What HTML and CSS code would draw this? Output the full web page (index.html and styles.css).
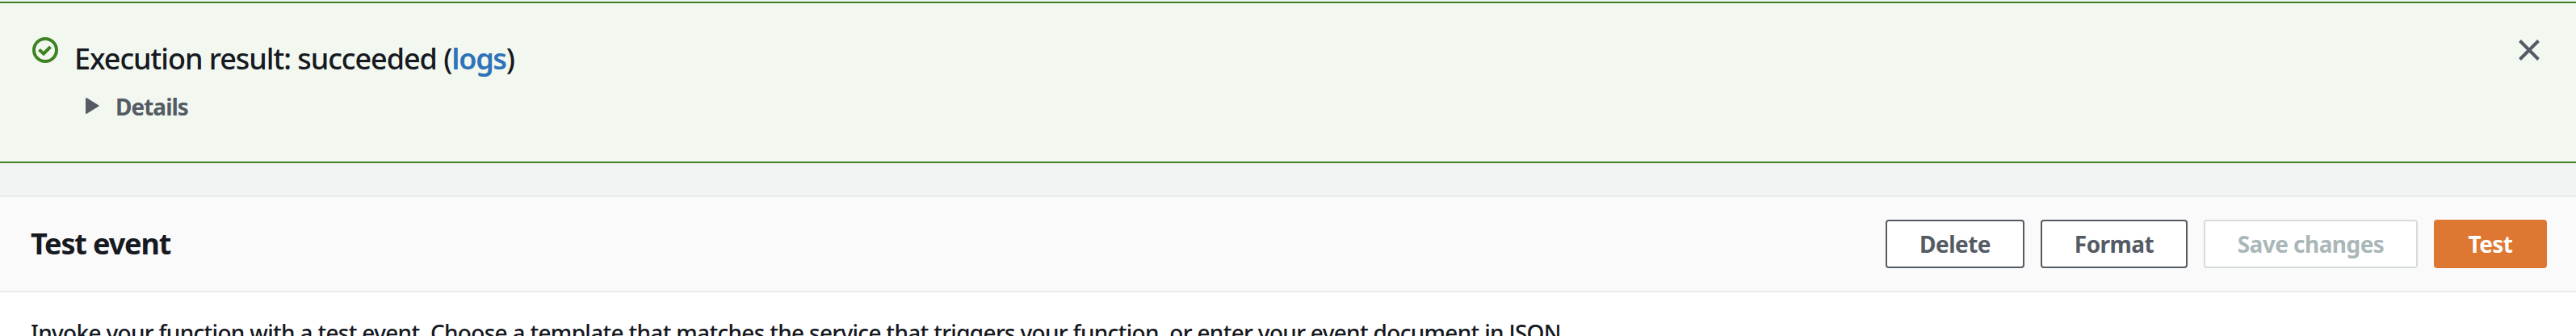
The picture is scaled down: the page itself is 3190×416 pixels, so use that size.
FILE: index.html
```html
<!DOCTYPE html>
<html lang="en">
<head>
<meta charset="utf-8">
<title>Test event</title>
<link rel="stylesheet" href="styles.css">
</head>
<body>
<section class="flash">
  <svg class="status" viewBox="0 0 32 32"><circle cx="16" cy="16" r="14"/><path d="M8.500 15.500l5.500 5 8.500-8.500"/></svg>
  <div class="message">
    <div class="result"><span>Execution result: succeeded (<a class="link">logs</a>)</span></div>
    <div class="details"><svg class="caret" viewBox="0 0 18 20"><path d="M2 1v18L16.500 10z"/></svg><span class="details-label">Details</span></div>
  </div>
  <svg class="close" viewBox="0 0 26 26"><path d="M1.500 1.500l23 23M24.500 1.500l-23 23"/></svg>
</section>
<section class="panel">
  <header class="head">
    <h2 class="title">Test event</h2>
    <div class="actions">
      <button class="btn delete"><span>Delete</span></button>
      <button class="btn format"><span>Format</span></button>
      <button class="btn save" disabled><span>Save changes</span></button>
      <button class="btn primary"><span>Test</span></button>
    </div>
  </header>
  <p class="intro">Invoke your function with a test event. Choose a template that matches the service that triggers your function, or enter your event document in JSON.</p>
</section>
</body>
</html>
```
FILE: styles.css
```css
* { box-sizing: border-box; }
body {
  margin: 0;
  padding-top: 2px;
  height: 416px;
  overflow: hidden;
  background: #f2f3f3;
  color: #16191f;
  font-family: "Noto Sans", sans-serif;
}
.flash {
  display: flex;
  align-items: flex-start;
  height: 200px;
  padding: 0 45px 0 40px;
  border-top: 2px solid #3f8223;
  border-bottom: 2px solid #3f8223;
  background: #f2f8f0;
}
.status { width: 32px; height: 32px; margin-top: 42px; fill: none; stroke: #3f8223; stroke-width: 4; }
.message { flex: 1; padding: 44px 0 0 20px; white-space: nowrap; }
.result { font-size: 36px; line-height: 50px; font-weight: 500; letter-spacing: -1.05px; }
.link { color: #2e73b8; font-weight: 600; letter-spacing: -1.3px; }
.details { display: flex; align-items: center; height: 40px; margin-top: 14px; padding-left: 13px; color: #545b64; }
.caret { width: 18px; height: 20px; margin: 0 20px 2px 0; fill: #545b64; stroke: #545b64; stroke-width: 2; stroke-linejoin: round; }
.details-label { font-size: 28px; line-height: 40px; font-weight: 700; letter-spacing: -1px; }
.close { width: 26px; height: 26px; margin-top: 45px; fill: none; stroke: #545b64; stroke-width: 4; }
.panel { margin-top: 40px; height: 174px; overflow: hidden; border-top: 2px solid #eaeded; background: #fff; }
.head {
  display: flex;
  align-items: center;
  justify-content: space-between;
  height: 118px;
  padding: 0 36px 0 38px;
  border-bottom: 2px solid #eaeded;
  background: #fafafa;
}
.title { margin: 0; font-size: 36px; line-height: 44px; font-weight: 700; letter-spacing: -1.15px; }
.actions { display: flex; gap: 20px; }
.btn {
  display: flex;
  align-items: center;
  justify-content: center;
  height: 60px;
  padding: 0;
  border: 2px solid #545b64;
  border-radius: 4px;
  background: #fff;
  color: #545b64;
  font: 700 28px/40px "Noto Sans", sans-serif;
  letter-spacing: -0.55px;
  white-space: nowrap;
}
.delete { width: 172px; }
.format { width: 182px; }
.save { width: 265px; border-color: #d5dbdb; color: #aab7b8; }
.primary { width: 140px; border-color: #dd7731; background: #dd7731; color: #fff; }
.intro { margin: 0; padding: 28px 38px 0; font-size: 28px; line-height: 44px; font-weight: 500; letter-spacing: -0.7px; white-space: nowrap; }
```
